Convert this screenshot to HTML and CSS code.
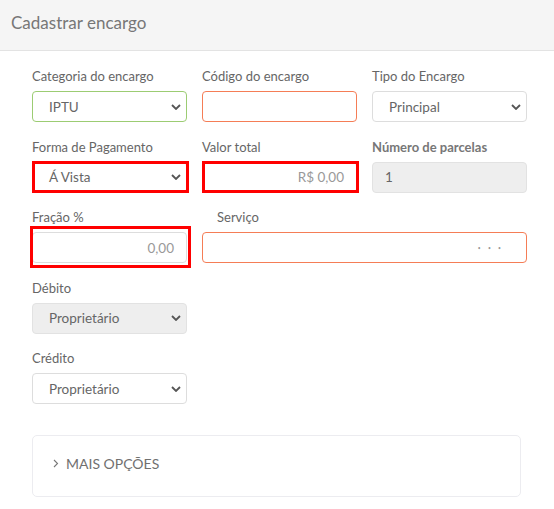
FILE: index.html
```html
<!DOCTYPE html>
<html lang="pt-BR">
<head>
<meta charset="utf-8">
<title>Cadastrar encargo</title>
<link rel="stylesheet" href="styles.css">
</head>
<body>
<div class="header"><h1 class="title">Cadastrar encargo</h1></div>
<div class="form">
  <div class="grid">
    <div class="field">
      <div class="label">Categoria do encargo</div>
      <div class="control select ok"><span>IPTU</span><svg class="chev" width="10" height="6" viewBox="0 0 10 6"><path d="M1 1l4 4 4-4" fill="none" stroke="#555" stroke-width="1.8"/></svg></div>
    </div>
    <div class="field">
      <div class="label">Código do encargo</div>
      <div class="control input warn"></div>
    </div>
    <div class="field">
      <div class="label">Tipo do Encargo</div>
      <div class="control select"><span>Principal</span><svg class="chev" width="10" height="6" viewBox="0 0 10 6"><path d="M1 1l4 4 4-4" fill="none" stroke="#555" stroke-width="1.8"/></svg></div>
    </div>

    <div class="field">
      <div class="label">Forma de Pagamento</div>
      <div class="control select marked"><span>Á Vista</span><svg class="chev" width="10" height="6" viewBox="0 0 10 6"><path d="M1 1l4 4 4-4" fill="none" stroke="#555" stroke-width="1.8"/></svg><i class="mark mark-a"></i></div>
    </div>
    <div class="field">
      <div class="label">Valor total</div>
      <div class="control input num marked"><span class="ph">R$ 0,00</span><i class="mark mark-b"></i></div>
    </div>
    <div class="field">
      <div class="label strong">Número de parcelas</div>
      <div class="control input disabled"><span>1</span></div>
    </div>

    <div class="field">
      <div class="label">Fração %</div>
      <div class="control input num marked"><span class="ph">0,00</span><i class="mark mark-c"></i></div>
    </div>
    <div class="field span2">
      <div class="label indent">Serviço</div>
      <div class="control input warn dots-wrap"><span class="dots">• • •</span></div>
    </div>

    <div class="field">
      <div class="label">Débito</div>
      <div class="control select disabled"><span>Proprietário</span><svg class="chev" width="10" height="6" viewBox="0 0 10 6"><path d="M1 1l4 4 4-4" fill="none" stroke="#555" stroke-width="1.8"/></svg></div>
    </div>
    <div class="field row-start">
      <div class="label">Crédito</div>
      <div class="control select"><span>Proprietário</span><svg class="chev" width="10" height="6" viewBox="0 0 10 6"><path d="M1 1l4 4 4-4" fill="none" stroke="#555" stroke-width="1.8"/></svg></div>
    </div>
  </div>

  <div class="more">
    <svg class="more-chev" width="6" height="9" viewBox="0 0 6 9"><path d="M1 1l3.5 3.5L1 8" fill="none" stroke="#777" stroke-width="1.1"/></svg>
    <span>MAIS OPÇÕES</span>
  </div>
</div>
</body>
</html>
```
FILE: styles.css
```css
* { box-sizing: border-box; }
html, body { margin: 0; padding: 0; background: #fff; }
body { font-family: Lato, "Open Sans", "Liberation Sans", sans-serif; color: #666; }

.header {
  height: 51px;
  background: #f5f5f5;
  border-bottom: 1px solid #e3e3e3;
  padding: 12px 0 0 11px;
}
.title {
  margin: 0;
  font-size: 17px;
  font-weight: normal;
  line-height: 22px;
  color: #777;
}

.form { padding: 16px 27px 0 32px; }

.grid {
  display: grid;
  grid-template-columns: 155px 155px 155px;
  column-gap: 15px;
  row-gap: 15.5px;
}
.span2 { grid-column: 2 / span 2; }
.row-start { grid-column: 1; }

.label {
  font-size: 13px;
  line-height: 18px;
  margin-bottom: 6px;
  color: #666;
  white-space: nowrap;
}
.label.strong { font-weight: bold; color: #777; }
.label.indent { padding-left: 15px; }

.control {
  position: relative;
  height: 31px;
  border: 1px solid #ddd;
  border-radius: 4px;
  background: #fff;
  font-size: 13.5px;
  color: #666;
  display: flex;
  align-items: center;
}
.select { padding: 0 5px 0 16px; justify-content: space-between; }
.input { padding: 0 12px; }
.num { justify-content: flex-end; }
.ph { color: #999; }
.ok { border-color: #9ccc73; }
.warn { border-color: #f57d56; }
.disabled { background: #eee; border-color: #e2e2e2; }
.chev { flex: none; }

.dots-wrap { justify-content: flex-end; padding-right: 22px; }
.dots { font-size: 5px; letter-spacing: 3px; color: #999; }

.mark {
  position: absolute;
  border: 3px solid #f00;
  pointer-events: none;
}
.mark-a { top: -2px; left: -1px; right: -3px; bottom: -1px; }
.mark-b { top: -2px; left: -1px; right: -3px; bottom: -1px; }
.mark-c { top: -7px; left: -3px; right: -5px; bottom: -6px; }

.more {
  margin-top: 31px;
  width: 489px;
  height: 62px;
  border: 1px solid #ececf0;
  border-radius: 5px;
  display: flex;
  align-items: center;
  padding: 0 0 6px 20px;
  gap: 7px;
  font-size: 14px;
  color: #707070;
}
.more-chev { flex: none; }
```
